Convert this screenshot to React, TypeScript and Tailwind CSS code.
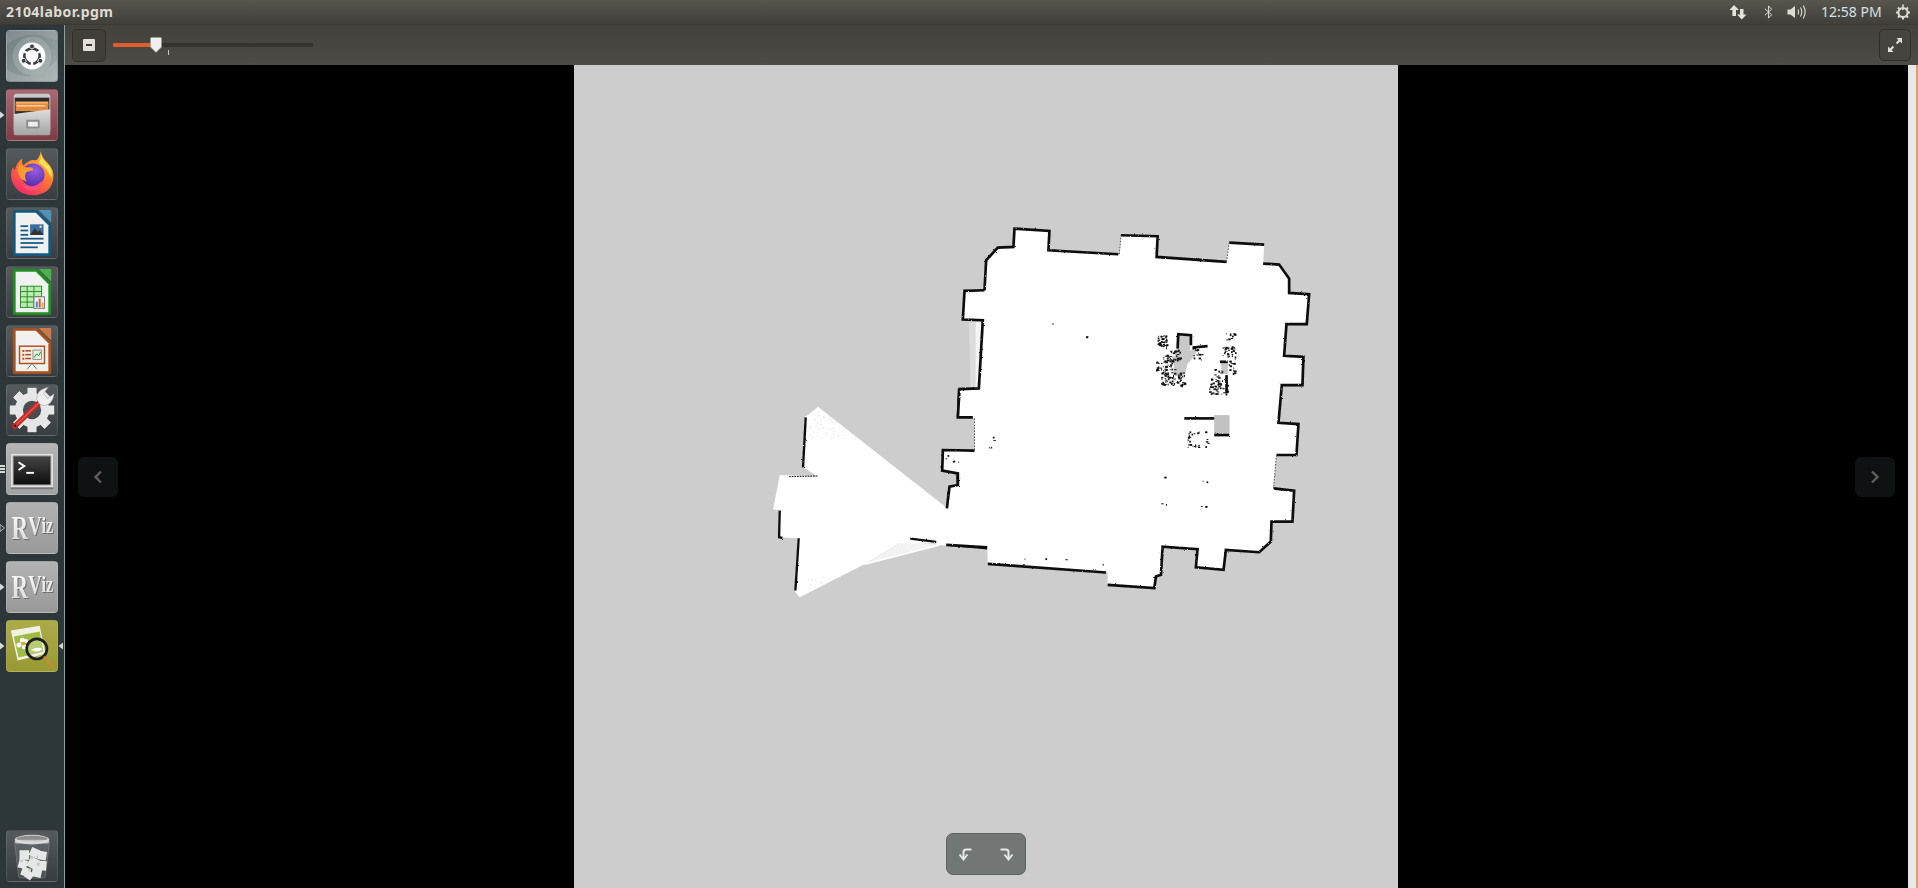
import React from "react";

type P = [number, number];
const pts = (a: P[]) => a.map((p) => p.join(",")).join(" ");

function noise(seed: number, n: number, x0: number, y0: number, x1: number, y1: number): P[] {
  let s = seed;
  const r = () => {
    s = (s * 16807) % 2147483647;
    return s / 2147483647;
  };
  const out: P[] = [];
  for (let i = 0; i < n; i++) out.push([x0 + r() * (x1 - x0), y0 + r() * (y1 - y0)]);
  return out;
}

const room: P[] = [[225,55],[330,62],[327,120],[540,132],[545,75],[655,78],[652,140],[862,155],[870,97],[975,103],[972,160],[1020,163],[1050,205],[1050,248],[1110,252],[1103,342],[1042,342],[1035,437],[1093,440],[1090,525],[1028,525],[1018,638],[1078,642],[1072,735],[1012,735],[1003,835],[1065,842],[1060,935],[997,935],[995,995],[960,1027],[860,1020],[853,1080],[770,1072],[775,1018],[670,1010],[665,1095],[650,1100],[645,1135],[505,1125],[505,1088],[145,1062],[143,1012],[-10,1005],[-10,885],[22,895],[30,830],[55,825],[55,790],[8,782],[10,720],[105,722],[105,625],[55,622],[60,537],[118,535],[130,330],[70,328],[75,242],[135,240],[140,150],[175,112],[222,110]];

const walls: P[][] = [
  [[135,240],[140,150],[175,112],[222,110],[225,55],[330,62],[327,120],[537,132]],
  [[545,75],[655,78],[652,140],[862,155]],
  [[870,97],[975,103]],
  [[972,160],[1020,163],[1050,205],[1050,248],[1110,252],[1103,342],[1042,342],[1035,437],[1093,440],[1090,525],[1028,525],[1018,638],[1078,642],[1072,735],[1012,735]],
  [[1003,835],[1065,842],[1060,935],[997,935],[995,995],[960,1027],[860,1020],[853,1080],[770,1072],[775,1018],[670,1010],[665,1095],[650,1100],[645,1135],[505,1125]],
  [[500,1088],[145,1062]],
  [[143,1012],[20,1005]],
  [[22,895],[30,830],[55,825],[55,790],[8,782],[10,720],[105,722]],
  [[100,622],[55,622],[60,537],[118,535],[130,330],[70,328],[75,242],[135,240]],
  [[735,625],[825,625]],
  [[825,675],[870,675]],
  [[862,495],[862,550]],
  [[715,415],[717,372],[755,375],[755,405]],
  [[760,412],[805,408]],
  [[842,455],[866,455]],
];
const thinWalls: P[][] = [
  [[540,132],[545,75]],
  [[862,155],[870,97]],
  [[1012,735],[1003,835]],
  [[105,625],[105,722]],
];

const cone: P[] = [[205,80],[175,105],[165,110],[160,262],[205,290],[90,285],[70,388],[90,392],[88,472],[145,475],[135,635],[150,652],[340,555],[450,490],[580,490],[600,500],[640,440],[600,390]];
const coneWalls: P[][] = [
  [[168,112],[160,262]],
  [[90,392],[88,472],[98,474]],
  [[147,475],[137,632]],
  [[482,476],[578,488]],
  [[590,494],[715,505]],
];

const dots = [
  ...noise(11, 42, 655, 375, 682, 412),
  ...noise(13, 42, 672, 418, 722, 450),
  ...noise(17, 40, 650, 450, 705, 482),
  ...noise(19, 75, 665, 485, 735, 526),
  ...noise(23, 16, 760, 412, 790, 450),
  ...noise(29, 55, 810, 505, 865, 552),
  ...noise(31, 12, 860, 368, 888, 388),
  ...noise(37, 30, 850, 405, 888, 440),
  ...noise(41, 20, 868, 445, 888, 490),
  ...noise(43, 10, 825, 470, 850, 505),
  ...noise(53, 40, 745, 660, 808, 712).filter(([x, y]) => x < 755 || x > 795 || y < 672 || y > 700),
  [338,340],[440,378],[442,382],[160,680],[162,690],[155,710],[148,712],[675,800],[790,812],[802,814],[666,880],[680,882],[785,888],[798,888],[255,1046],[318,1045],[378,1048],[490,1062],[18,745],[40,752],[56,755],[24,735],
] as P[];

const fuzz = [...noise(61, 120, 175, 85, 320, 175), ...noise(67, 60, 175, 590, 300, 650)];

function GridMap() {
  return (
    <svg viewBox="574 65 825 823" className="w-full h-full block">
      <defs>
        <filter id="rough" x="-5%" y="-5%" width="110%" height="110%">
          <feTurbulence type="fractalNoise" baseFrequency="0.12" numOctaves="2" seed="4" />
          <feDisplacementMap in="SourceGraphic" scale="6" />
        </filter>
      </defs>
      <g transform="translate(750 380) scale(0.33333)">
        <polygon points={pts(cone)} fill="#fff" />
        <g fill="#cdcdcd" opacity="0.55">
          {fuzz.map(([x, y], i) => <rect key={i} x={x} y={y} width="3" height="3" />)}
        </g>
        <g fill="none" stroke="#111" strokeWidth="7" filter="url(#rough)">
          {coneWalls.map((w, i) => <polyline key={i} points={pts(w)} />)}
          <polyline points="118,290 205,288" strokeWidth="3" strokeDasharray="5 3" />
          <line x1="596" y1="388" x2="596" y2="345" strokeWidth="8" />
          <polyline points="596,345 600,322 625,318 625,280" strokeWidth="8" />
          <polyline points="625,275 578,272 582,212 675,215" strokeWidth="5" />
          <polyline points="625,112 628,30 690,28" strokeWidth="7" />
          <polyline points="625,112 680,114" strokeWidth="3" strokeDasharray="5 3" />
        </g>
        <polyline points="345,553 570,495" fill="none" stroke="#fff" strokeWidth="5" />
        <polygon points="345,553 460,485 570,494" fill="#fff" opacity="0.75" />
      </g>
      <g transform="translate(940 210) scale(0.33333)">
        <polygon points={pts(room)} fill="#fff" />
        <polygon points="88,335 108,335 108,530 93,530" fill="#dcdcdc" />
        <polygon points="108,335 125,335 120,530 108,530" fill="#f4f4f4" />
        <polygon points="718,375 752,378 752,420 778,415 760,445 745,460 735,505 702,495 705,440 715,405" fill="#c8c8c8" />
        <polygon points="845,455 866,455 866,492 848,492" fill="#c8c8c8" />
        <rect x="825" y="615" width="46" height="60" fill="#c2c2c2" />
        <g fill="none" stroke="#0c0c0c" strokeWidth="8" filter="url(#rough)">
          {walls.map((w, i) => <polyline key={i} points={pts(w)} />)}
          {thinWalls.map((w, i) => <polyline key={i} points={pts(w)} strokeWidth="3" strokeDasharray="5 4" stroke="#555" />)}
        </g>
        <g fill="#111">
          {dots.map(([x, y], i) => <rect key={i} x={x} y={y} width={3 + (i % 3) * 2} height={3 + (i % 2) * 2.5} />)}
        </g>
      </g>
    </svg>
  );
}

function UbuntuLogo() {
  return (
    <svg viewBox="0 0 52 52" className="w-full h-full">
      <path d="M0 14 Q22 -4 52 10 L52 0 L0 0Z" fill="#ffffff" opacity="0.1" />
      <path d="M0 40 Q26 58 52 30 L52 52 L0 52Z" fill="#ffffff" opacity="0.12" />
      <circle cx="26" cy="26" r="20" fill="#fff" opacity="0.14" />
      <circle cx="26" cy="26" r="14" fill="#fff" />
      <circle cx="26" cy="26" r="8" fill="none" stroke="#3a4044" strokeWidth="2.8" />
      {[0, 120, 240].map((a) => (
        <g key={a} transform={`rotate(${a} 26 26)`}>
          <rect x="24.8" y="13" width="2.4" height="7" fill="#fff" transform="rotate(60 26 26)" />
          <circle cx="26" cy="16" r="2.5" fill="#3a4044" stroke="#fff" strokeWidth="0.8" />
        </g>
      ))}
    </svg>
  );
}

function Files() {
  return (
    <svg viewBox="0 0 52 52" className="w-full h-full">
      <defs>
        <linearGradient id="cab" x1="0" y1="0" x2="0" y2="1"><stop offset="0" stopColor="#dedede" /><stop offset="1" stopColor="#a3a3a3" /></linearGradient>
      </defs>
      <path d="M7 7 Q7 4 10 4 L42 4 Q45 4 45 7 L45 42 L7 42Z" fill="#c9c9c9" />
      <rect x="8" y="8" width="36" height="18" fill="#2b2b2b" />
      <rect x="9" y="12" width="34" height="4" fill="#f6b26b" />
      <rect x="9" y="14" width="34" height="8" fill="#e28a3c" />
      <rect x="10" y="16" width="30" height="1" fill="#fff3dc" />
      <path d="M7 25 L45 20 L45 45 Q45 47 43 47 L9 47 Q7 47 7 45Z" fill="url(#cab)" />
      <rect x="20" y="31" width="14" height="9" rx="1" fill="#8d8d8d" />
      <rect x="22" y="33" width="10" height="5" fill="#eee" />
    </svg>
  );
}

function Firefox() {
  return (
    <svg viewBox="0 0 52 52" className="w-full h-full">
      <defs>
        <linearGradient id="ff" x1="0.8" y1="0" x2="0.2" y2="1"><stop offset="0" stopColor="#ffd23f" /><stop offset="0.45" stopColor="#ff7b2e" /><stop offset="1" stopColor="#f0246e" /></linearGradient>
        <radialGradient id="ffg" cx="0.6" cy="0.3" r="0.8"><stop offset="0" stopColor="#9a5be0" /><stop offset="1" stopColor="#4a2aa8" /></radialGradient>
      </defs>
      <path d="M35 2 Q36 9 42 14 Q50 22 48 32 Q45 47 28 48 Q10 48 5 33 Q3 25 6 19 L8 22 Q10 14 16 10 Q15 15 17 17 Q25 10 30 12 Q35 8 35 2Z" fill="url(#ff)" />
      <path d="M35 4 Q36 12 44 18 Q48 24 46 30 Q42 20 33 14 Q37 10 35 4Z" fill="#ffe25a" />
      <circle cx="27" cy="27" r="12" fill="url(#ffg)" />
      <path d="M13 14 Q16 20 24 19 Q28 20 27 22 L20 24 Q17 30 21 34 Q12 32 11 22Z" fill="#ff9a2e" />
      <path d="M15 36 Q26 44 38 32 Q35 44 24 43 Q18 42 15 36Z" fill="#ff4f7a" />
    </svg>
  );
}

function DocIcon({ border, corner, children }: { border: string; corner: string; children: React.ReactNode }) {
  return (
    <svg viewBox="0 0 52 52" className="w-full h-full">
      <path d="M33 2 L45 2 Q46 2 46 3 L46 15Z" fill={corner} />
      <path d="M8 2 L31 2 L46 17 L46 48 Q46 50 44 50 L8 50 Q6 50 6 48 L6 4 Q6 2 8 2Z" fill={border} />
      <path d="M9 5 L30 5 L43 18 L43 47 L9 47Z" fill="#f1f1f1" />
      {children}
    </svg>
  );
}

function Writer() {
  return (
    <DocIcon border="#14597f" corner="#4e93bb">
      <rect x="14" y="18" width="8" height="1.8" fill="#14597f" />
      <rect x="14" y="22.5" width="8" height="1.8" fill="#14597f" />
      <rect x="14" y="27" width="8" height="1.8" fill="#14597f" />
      <rect x="24" y="17" width="14" height="11" fill="#3a6ea5" />
      <path d="M24 28 L29 21 L32 25 L34 23 L38 28Z" fill="#333" />
      <circle cx="35" cy="19.5" r="1.3" fill="#f3d36b" />
      <rect x="14" y="31" width="24" height="1.8" fill="#14597f" />
      <rect x="14" y="35.5" width="24" height="1.8" fill="#14597f" />
      <rect x="14" y="40" width="18" height="1.8" fill="#14597f" />
    </DocIcon>
  );
}

function Calc() {
  return (
    <DocIcon border="#1f8f1f" corner="#48b548">
      <rect x="14" y="20" width="22" height="22" fill="#bdeab0" stroke="#1f8f1f" strokeWidth="1" />
      <path d="M14 25.5H36M14 31H36M14 36.5H36M21 20V42M28 20V42" stroke="#1f8f1f" strokeWidth="1" />
      <rect x="28" y="31" width="11" height="12" fill="#eee" stroke="#777" />
      <rect x="30" y="36" width="2" height="6" fill="#3a8fd0" />
      <rect x="33" y="33" width="2" height="9" fill="#d9552b" />
      <rect x="36" y="37" width="2" height="5" fill="#e8a92c" />
    </DocIcon>
  );
}

function Impress() {
  return (
    <DocIcon border="#a8501e" corner="#cc7a46">
      <rect x="13" y="21" width="26" height="18" fill="#f8ece4" stroke="#a8501e" strokeWidth="1.5" />
      <rect x="16" y="25" width="2" height="2" fill="#a8501e" />
      <rect x="19" y="25" width="6" height="1.6" fill="#a8501e" />
      <rect x="16" y="29" width="2" height="2" fill="#a8501e" />
      <rect x="19" y="29" width="6" height="1.6" fill="#a8501e" />
      <rect x="16" y="33" width="2" height="2" fill="#a8501e" />
      <rect x="19" y="33" width="6" height="1.6" fill="#a8501e" />
      <rect x="27" y="25" width="9" height="10" fill="#dfeedd" stroke="#555" strokeWidth="0.6" />
      <path d="M28 33 L31 29 L33 31 L35 27" stroke="#2f8f3f" strokeWidth="1" fill="none" />
      <path d="M26 39 L21 45M26 39 L31 45" stroke="#777" strokeWidth="1" />
    </DocIcon>
  );
}

function Tools() {
  const teeth = [0, 45, 90, 135, 180, 225, 270, 315];
  return (
    <svg viewBox="0 0 52 52" className="w-full h-full">
      <g fill="#e6e6e6">
        {teeth.map((a) => <rect key={a} x="21.5" y="3" width="9" height="46" transform={`rotate(${a} 26 26)`} />)}
        <circle cx="26" cy="26" r="18" />
      </g>
      <circle cx="26" cy="26" r="9.5" fill="#4a4d50" />
      <path d="M8 43 L36 16" stroke="#c62a28" strokeWidth="5.5" strokeLinecap="round" />
      <path d="M8 43 L34 18" stroke="#e2564c" strokeWidth="1.4" strokeLinecap="round" />
      <circle cx="8.5" cy="42.5" r="1.5" fill="#5a1614" />
      <path d="M31 15 Q31 6 38 4 L43 2 L38 9 L42 14 L49 9 Q48 17 43 20 Q38 23 34 20Z" fill="#eeeeee" stroke="#999" strokeWidth="0.5" />
    </svg>
  );
}

function Terminal() {
  return (
    <svg viewBox="0 0 52 52" className="w-full h-full">
      <defs>
        <linearGradient id="term" x1="0" y1="0" x2="0" y2="1"><stop offset="0" stopColor="#444" /><stop offset="1" stopColor="#0e0e0e" /></linearGradient>
      </defs>
      <rect x="4" y="10" width="44" height="37" fill="#777" />
      <rect x="4" y="10" width="44" height="35" fill="#e2e2e2" />
      <rect x="6" y="12" width="40" height="31" fill="#8b8b8b" />
      <rect x="7" y="13" width="38" height="29" fill="url(#term)" />
      <path d="M12 19 L18 23 L12 27" fill="none" stroke="#fff" strokeWidth="2" />
      <rect x="20" y="29" width="8" height="2" fill="#fff" />
    </svg>
  );
}

function RViz({ id }: { id: string }) {
  return (
    <svg viewBox="0 0 52 52" className="w-full h-full drop-shadow-[1px_1px_0_#6e6e6e]">
      <defs>
        <linearGradient id={id} x1="0" y1="0" x2="0" y2="1"><stop offset="0" stopColor="#ffffff" /><stop offset="1" stopColor="#d4d4d4" /></linearGradient>
      </defs>
      <text transform="scale(0.8 1.15)" x="6" y="33" fontFamily="'Liberation Serif', serif" fontWeight="700" fill={`url(#${id})`}>
        <tspan fontSize="30">R</tspan>
        <tspan fontSize="24" dy="-4">V</tspan>
        <tspan fontSize="21" dy="-2">iz</tspan>
      </text>
    </svg>
  );
}

function Viewer() {
  return (
    <svg viewBox="0 0 52 52" className="w-full h-full">
      <path d="M4 10 L34 5 L40 34 L11 41Z" fill="#f1f0e2" />
      <path d="M7 16 L34 11 L38 32 L12 38Z" fill="#9dbb45" />
      <g fill="#fff">
        <circle cx="16" cy="20" r="2.6" /><circle cx="12.5" cy="25" r="2.6" /><circle cx="18" cy="27" r="2.6" /><circle cx="20" cy="21" r="2.2" />
      </g>
      <circle cx="17" cy="23.5" r="2" fill="#e6a32c" />
      <circle cx="31" cy="29" r="10.5" fill="#ffffff" fillOpacity="0.25" stroke="#1e2020" strokeWidth="2.8" />
      <path d="M25 30 Q31 26 37 29 Q32 34 25 30Z" fill="#fff" />
      <path d="M39 38 L47 47" stroke="#c88a3a" strokeWidth="2.6" strokeLinecap="round" />
    </svg>
  );
}

function Trash() {
  const blobs: [number, number, number, number][] = [[13,20,10,0],[24,18,9,25],[32,21,9,10],[12,30,9,15],[22,28,11,30],[31,31,10,5],[15,38,9,20],[26,38,10,12],[19,42,8,35]];
  return (
    <svg viewBox="0 0 52 52" className="w-full h-full">
      <path d="M8 12 L12 47 Q12 49 15 49 L37 49 Q40 49 40 47 L44 12Z" fill="#ffffff" fillOpacity="0.1" stroke="#bbb" strokeOpacity="0.3" />
      <ellipse cx="26" cy="9" rx="18" ry="5" fill="#cfcfcf" />
      <ellipse cx="26" cy="8" rx="16" ry="3" fill="#888c8c" />
      <rect x="8" y="9" width="36" height="4" rx="2" fill="#e0e0e0" opacity="0.7" />
      <g fill="#e6e8e7">
        {blobs.map(([x, y, s, a], i) => <rect key={i} x={x} y={y} width={s} height={s} transform={`rotate(${a} ${x + s / 2} ${y + s / 2})`} />)}
      </g>
      <g fill="#c4c7c6">
        <rect x="24" y="26" width="3" height="3" /><rect x="14" y="30" width="2.5" height="2.5" /><rect x="31" y="33" width="3" height="3" /><rect x="22" y="39" width="2.5" height="2.5" />
      </g>
    </svg>
  );
}

function Tile({ bg, children }: { bg: string; children: React.ReactNode }) {
  return (
    <div className={`w-[52px] h-[52px] rounded-[4px] overflow-hidden shrink-0 border border-white/10 ${bg}`}>
      {children}
    </div>
  );
}

function PipRight({ hollow = false }: { hollow?: boolean }) {
  return (
    <svg viewBox="0 0 5 8" className="absolute left-0 top-1/2 -translate-y-1/2 w-[5px] h-[8px]">
      <path d="M0 0.5 L4.5 4 L0 7.5Z" fill={hollow ? "none" : "#d8d8d8"} stroke="#d8d8d8" strokeWidth={hollow ? 0.8 : 0} />
    </svg>
  );
}

function Slot({ children, pip }: { children: React.ReactNode; pip?: React.ReactNode }) {
  return (
    <div className="relative w-full flex justify-center">
      {pip}
      {children}
    </div>
  );
}

const darkTile = "bg-linear-to-b from-[#555a5d] to-[#383e41]";
const grayTile = "bg-linear-to-b from-[#b2b2b2] to-[#999999]";

function Launcher() {
  return (
    <aside className="w-[65px] shrink-0 bg-[#2d3639] border-r border-[#86a5a2] flex flex-col pt-[5px] pb-[6px] gap-[7px] pr-px">
      <Slot><Tile bg="bg-linear-to-br from-[#6f7d80] to-[#a3afae]"><UbuntuLogo /></Tile></Slot>
      <Slot pip={<PipRight />}><Tile bg="bg-linear-to-b from-[#a86a74] to-[#7c3c46]"><Files /></Tile></Slot>
      <Slot><Tile bg={darkTile}><Firefox /></Tile></Slot>
      <Slot><Tile bg={darkTile}><Writer /></Tile></Slot>
      <Slot><Tile bg={darkTile}><Calc /></Tile></Slot>
      <Slot><Tile bg={darkTile}><Impress /></Tile></Slot>
      <Slot><Tile bg={darkTile}><Tools /></Tile></Slot>
      <Slot pip={<div className="absolute left-0 top-1/2 -translate-y-1/2 flex flex-col gap-px">
        <span className="block w-[5px] h-[2px] bg-[#d8d8d8]" />
        <span className="block w-[5px] h-[2px] bg-[#d8d8d8]" />
        <span className="block w-[5px] h-[2px] bg-[#d8d8d8]" />
      </div>}><Tile bg="bg-linear-to-b from-[#b4b4b4] to-[#a2a2a2]"><Terminal /></Tile></Slot>
      <Slot pip={<PipRight hollow />}><Tile bg={grayTile}><RViz id="rv1" /></Tile></Slot>
      <Slot pip={<PipRight />}><Tile bg={grayTile}><RViz id="rv2" /></Tile></Slot>
      <Slot pip={<>
        <PipRight />
        <svg viewBox="0 0 5 8" className="absolute right-0 top-1/2 -translate-y-1/2 w-[5px] h-[8px]"><path d="M5 0.5 L0.5 4 L5 7.5Z" fill="#d8d8d8" /></svg>
      </>}><Tile bg="bg-linear-to-b from-[#abab4a] to-[#999933]"><Viewer /></Tile></Slot>
      <div className="flex-1" />
      <Slot><Tile bg="bg-linear-to-b from-[#555b5d] to-[#363c3f]"><Trash /></Tile></Slot>
    </aside>
  );
}

function TopBar() {
  return (
    <header className="h-[25px] shrink-0 bg-linear-to-b from-[#57554d] to-[#403f3a] flex items-center justify-between pl-[6px] pr-[7px] font-['Noto_Sans',sans-serif] border-b border-[#3a3934]">
      <span className="text-[14px] font-bold leading-none text-[#dfdbd2] tracking-[0.45px]">2104labor.pgm</span>
      <div className="flex items-center text-[#dfdbd2]">
        <svg viewBox="0 0 18 16" className="w-[18px] h-[16px] mr-[17px]" fill="#e6e3da">
          <path d="M5 1 L10 6 L7 6 L7 12 L3.4 12 L3.4 6 L0.5 6Z" />
          <path d="M11 5 L14.5 5 L14.5 10.5 L17.5 10.5 L12.8 15.5 L8 10.5 L11 10.5Z" />
        </svg>
        <svg viewBox="0 0 10 16" className="w-[9px] h-[16px] mr-[14px]" fill="none" stroke="#dfdbd2" strokeWidth="1.1">
          <path d="M1 4.5 L8.5 11 L5 14.8 L5 1.2 L8.5 5 L1 11.5" />
        </svg>
        <svg viewBox="0 0 21 16" className="w-[21px] h-[16px] mr-[13px]" fill="none" stroke="#dfdbd2" strokeWidth="1.1">
          <path d="M0.5 5.5 H3.5 L8 2 V14 L3.5 10.5 H0.5Z" fill="#dfdbd2" stroke="none" />
          <path d="M11 5.5 Q12.5 8 11 10.5" />
          <path d="M13.5 3.5 Q16 8 13.5 12.5" />
          <path d="M16.3 1.5 Q20 8 16.3 14.5" />
        </svg>
        <span className="text-[14px] leading-none text-[#d6e0e6] font-normal mr-[14px] w-[60px] whitespace-nowrap">12:58 PM</span>
        <svg viewBox="0 0 16 16" className="w-[16px] h-[16px]" fill="none" stroke="#dfdbd2">
          <circle cx="8" cy="8.5" r="4.6" strokeWidth="2" />
          <path d="M8 0.5 V6" strokeWidth="1.6" />
          <path d="M8 13 V15.5 M1 8.5 H3.2 M12.8 8.5 H15 M3 3.5 L4.5 5 M13 3.5 L11.5 5 M3 13.5 L4.5 12 M13 13.5 L11.5 12" strokeWidth="2" />
        </svg>
      </div>
    </header>
  );
}

function Toolbar() {
  return (
    <div className="h-[40px] shrink-0 bg-linear-to-b from-[#42413b] to-[#4d4b45] flex items-center pl-[7px] pr-[7px]">
      <button className="w-[34px] h-[33px] rounded-[5px] border border-[#2f2e2a] bg-[#403f3a] flex items-center justify-center">
        <span className="w-[12px] h-[12px] rounded-[1px] bg-[#e3dfd8] flex items-center justify-center">
          <span className="w-[6px] h-[2px] bg-[#3c3b37]" />
        </span>
      </button>
      <div className="relative w-[200px] h-[4px] ml-[7px] bg-[#35342f] rounded-[1px]">
        <div className="w-[40px] h-full bg-[#df5d2c] rounded-l-[1px]" />
        <svg viewBox="0 0 12 16" className="absolute left-[37px] top-[-6px] w-[12px] h-[16px]">
          <path d="M1.5 0.5 H10.5 Q11.5 0.5 11.5 1.5 V10 L6 15.5 L0.5 10 V1.5 Q0.5 0.5 1.5 0.5Z" fill="#f0efed" stroke="#9d9b95" strokeWidth="0.6" />
        </svg>
        <span className="absolute left-[55px] top-[7px] w-px h-[5px] bg-[#c9c7c1]" />
      </div>
      <div className="flex-1" />
      <button className="w-[32px] h-[32px] rounded-[5px] border border-[#2f2e2a] bg-[#45443e] flex items-center justify-center">
        <svg viewBox="0 0 16 16" className="w-[16px] h-[16px]" fill="#e3dfd8">
          <path d="M9.5 1 H15 V6.5 L13 4.6 L10.3 7.2 L8.8 5.7 L11.4 3Z" />
          <path d="M6.5 15 H1 V9.5 L3 11.4 L5.7 8.8 L7.2 10.3 L4.6 13Z" />
        </svg>
      </button>
    </div>
  );
}

function Chevron({ dir }: { dir: "l" | "r" }) {
  return (
    <svg viewBox="0 0 10 14" className="w-[10px] h-[14px]" fill="none" stroke="#5e5e5c" strokeWidth="2.4">
      <path d={dir === "l" ? "M8 1.5 L2.5 7 L8 12.5" : "M2 1.5 L7.5 7 L2 12.5"} />
    </svg>
  );
}

function Viewer2() {
  return (
    <div className="relative flex-1 min-h-0 bg-black flex">
      <div className="flex-1 min-w-0 flex justify-center pr-px">
        <div className="w-[824px] h-full bg-[#cdcdcd]">
          <GridMap />
        </div>
      </div>
      <div className="w-[10px] shrink-0 flex">
        <div className="w-[8px] bg-[#e8e8e8]" />
        <div className="w-[2px] bg-[#f0956a]" />
      </div>
      <button className="absolute left-[13px] top-[392px] w-[40px] h-[40px] rounded-[6px] bg-[#0e1212] flex items-center justify-center">
        <Chevron dir="l" />
      </button>
      <button className="absolute right-[23px] top-[392px] w-[40px] h-[40px] rounded-[6px] bg-[#0e1212] flex items-center justify-center">
        <Chevron dir="r" />
      </button>
      <div className="absolute left-[881px] bottom-[13px] w-[80px] h-[42px] rounded-[7px] bg-[#727675] border border-[#5e6261] flex items-center justify-center gap-[24px]">
        <svg viewBox="0 0 16 16" className="w-[16px] h-[16px]" fill="none" stroke="#e8e8e6" strokeWidth="2">
          <path d="M13.5 3.5 H8 Q5.5 3.5 5.5 6 V13" />
          <path d="M1.5 8.5 L5.5 13.5 L9.5 8.5" />
        </svg>
        <svg viewBox="0 0 16 16" className="w-[16px] h-[16px]" fill="none" stroke="#e8e8e6" strokeWidth="2">
          <path d="M2.5 3.5 H8 Q10.5 3.5 10.5 6 V13" />
          <path d="M6.5 8.5 L10.5 13.5 L14.5 8.5" />
        </svg>
      </div>
    </div>
  );
}

export default function App() {
  return (
    <div className="w-[1918px] h-[888px] overflow-hidden flex flex-col bg-black">
      <TopBar />
      <div className="flex-1 min-h-0 flex">
        <Launcher />
        <main className="flex-1 min-w-0 flex flex-col">
          <Toolbar />
          <Viewer2 />
        </main>
      </div>
    </div>
  );
}
